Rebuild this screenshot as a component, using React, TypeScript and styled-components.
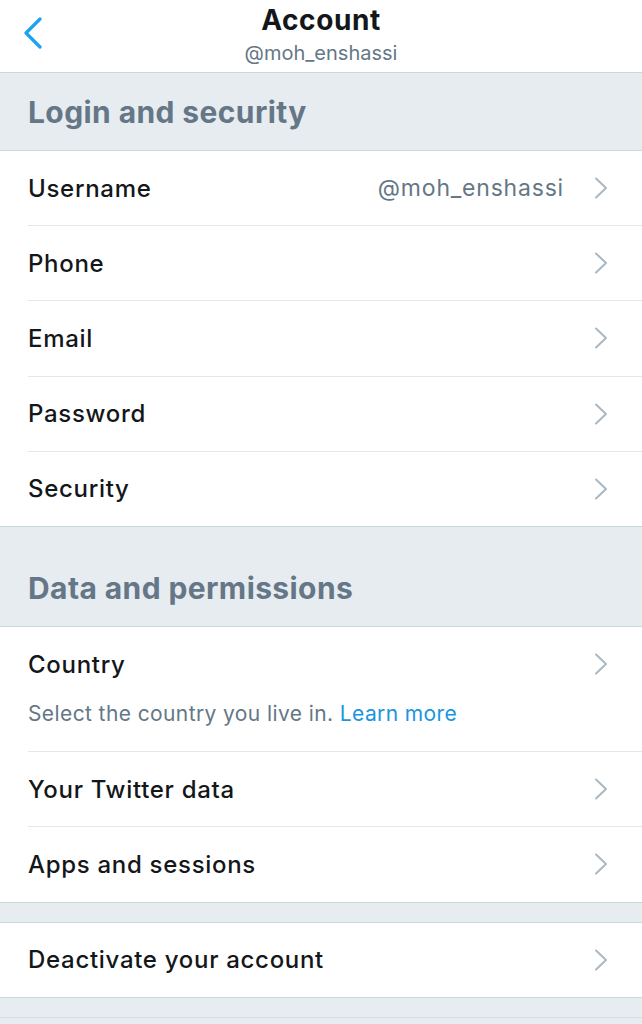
import React from "react";
import styled, { createGlobalStyle } from "styled-components";

const GlobalStyle = createGlobalStyle`
  html, body {
    margin: 0;
    padding: 0;
    background: #e6ecf0;
  }
  * {
    box-sizing: border-box;
  }
`;

const Page = styled.div`
  width: 642px;
  min-height: 1024px;
  background: #e6ecf0;
  font-family: Inter, "Liberation Sans", sans-serif;
  color: #14171a;
`;

const Header = styled.header`
  height: 73px;
  background: #fff;
  border-bottom: 1px solid #ccd6dd;
  display: flex;
  flex-direction: column;
  align-items: center;
  padding-top: 3px;
  position: relative;
`;

const BackButton = styled.button`
  position: absolute;
  left: 20px;
  top: 17px;
  border: none;
  background: none;
  padding: 0;
  display: flex;
`;

const Title = styled.h1`
  margin: 0;
  font-size: 28px;
  line-height: 34px;
  font-weight: 700;
  letter-spacing: 0.6px;
`;

const Handle = styled.div`
  font-size: 20px;
  line-height: 26px;
  color: #657786;
  margin-top: 3px;
`;

const SectionHeader = styled.div<{ $top: number }>`
  padding: ${(p) => p.$top}px 28px 18px;
  font-size: 30px;
  line-height: 40px;
  font-weight: 700;
  color: #657786;
  letter-spacing: 0.4px;
`;

const Spacer = styled.div`
  height: 19px;
`;

const Group = styled.div`
  background: #fff;
  border-top: 1px solid #ccd6dd;
  border-bottom: 1px solid #ccd6dd;
`;

const BottomLine = styled.div`
  border-top: 1px solid #d4dde3;
`;

const Row = styled.div`
  padding-left: 28px;
`;

const RowInner = styled.div<{ $last: boolean }>`
  padding: 0 34px 0 0;
  display: flex;
  flex-direction: column;
  border-bottom: ${(p) => (p.$last ? "none" : "1px solid #e1e8ed")};
`;

const RowLine = styled.div`
  display: flex;
  align-items: center;
  height: 74.2px;
`;

const Label = styled.div`
  flex: 1;
  font-size: 24px;
  font-weight: 500;
  letter-spacing: 0.7px;
`;

const Value = styled.div`
  font-size: 23px;
  color: #657786;
  letter-spacing: 0.8px;
  margin-right: 30px;
`;

const Description = styled.div`
  font-size: 21px;
  color: #657786;
  letter-spacing: 0.4px;
  padding-bottom: 24px;
  line-height: 26px;
`;

const Link = styled.a`
  color: #1b95e0;
  text-decoration: none;
`;

const Chevron = () => (
  <svg width="14" height="22" viewBox="0 0 14 22">
    <polyline
      points="2,1.5 12,11 2,20.5"
      fill="none"
      stroke="#aab8c2"
      strokeWidth="2"
      strokeLinecap="round"
      strokeLinejoin="round"
    />
  </svg>
);

const BackIcon = () => (
  <svg width="24" height="32" viewBox="0 0 24 32">
    <polyline
      points="20,2 6,16 20,30"
      fill="none"
      stroke="#1da1f2"
      strokeWidth="3.2"
      strokeLinecap="round"
      strokeLinejoin="round"
    />
  </svg>
);

type Item = { label: string; value?: string; description?: boolean };

const ItemRow: React.FC<{ item: Item; last: boolean }> = ({ item, last }) => (
  <Row>
    <RowInner $last={last}>
      <RowLine>
        <Label>{item.label}</Label>
        {item.value && <Value>{item.value}</Value>}
        <Chevron />
      </RowLine>
      {item.description && (
        <Description>
          Select the country you live in. <Link>Learn more</Link>
        </Description>
      )}
    </RowInner>
  </Row>
);

const ItemGroup: React.FC<{ items: Item[] }> = ({ items }) => (
  <Group>
    {items.map((item, i) => (
      <ItemRow key={item.label} item={item} last={i === items.length - 1} />
    ))}
  </Group>
);

const loginItems: Item[] = [
  { label: "Username", value: "@moh_enshassi" },
  { label: "Phone" },
  { label: "Email" },
  { label: "Password" },
  { label: "Security" },
];

const dataItems: Item[] = [
  { label: "Country", description: true },
  { label: "Your Twitter data" },
  { label: "Apps and sessions" },
];

export default function App() {
  return (
    <Page>
      <GlobalStyle />
      <Header>
        <BackButton>
          <BackIcon />
        </BackButton>
        <Title>Account</Title>
        <Handle>@moh_enshassi</Handle>
      </Header>
      <SectionHeader $top={19}>Login and security</SectionHeader>
      <ItemGroup items={loginItems} />
      <SectionHeader $top={41}>Data and permissions</SectionHeader>
      <ItemGroup items={dataItems} />
      <Spacer />
      <ItemGroup items={[{ label: "Deactivate your account" }]} />
      <Spacer />
      <BottomLine />
    </Page>
  );
}
